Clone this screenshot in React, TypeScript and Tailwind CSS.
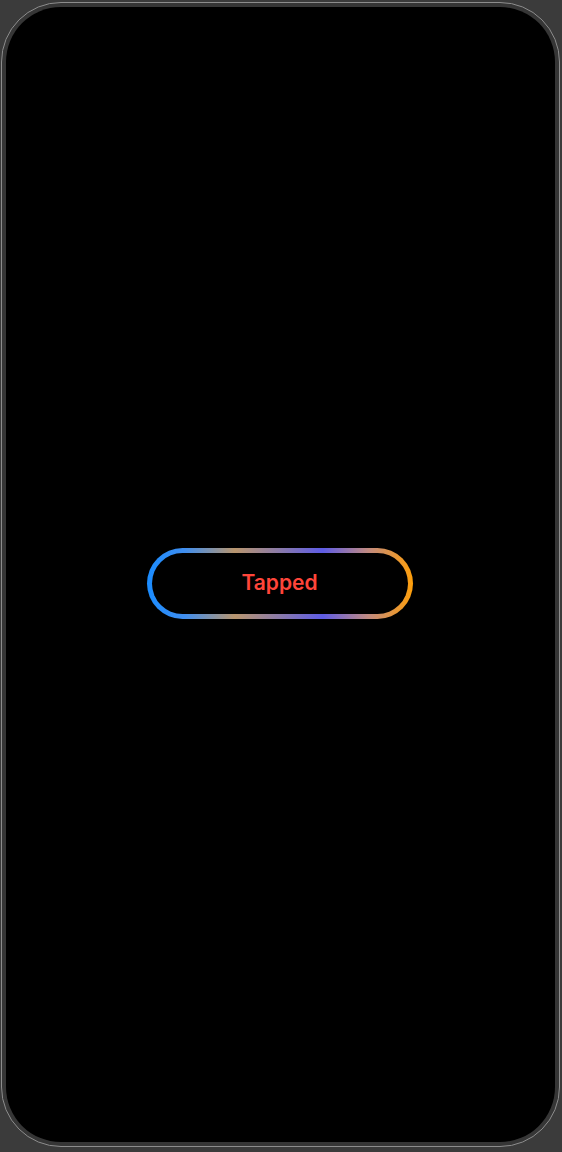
import React from "react";

export default function App() {
  return (
    <div className="w-[562px] h-[1152px] bg-[#3b3b3b] pt-[2px] pl-[1px] pr-[2px] pb-[5px]">
      <div className="h-full rounded-[60px] border border-[#8d8d8d] bg-[#363636] p-[4px]">
        <div className="h-full rounded-[55px] bg-black flex items-center justify-center">
          <div className="mt-[17px] mr-[2px] w-[266px] h-[71px] rounded-full p-[5px] bg-[linear-gradient(to_right,#1a8cff_0%,#3f8ef0_14%,#b8956e_33%,#8a7aaa_50%,#5e5ce6_66%,#c08a82_83%,#ff9f0a_100%)]">
            <div className="w-full h-full rounded-full bg-black flex items-center justify-center">
              <span className="text-[21px] font-semibold text-[#ff453a]" style={{ fontFamily: "Inter, 'Noto Sans', sans-serif" }}>
                Tapped
              </span>
            </div>
          </div>
        </div>
      </div>
    </div>
  );
}
